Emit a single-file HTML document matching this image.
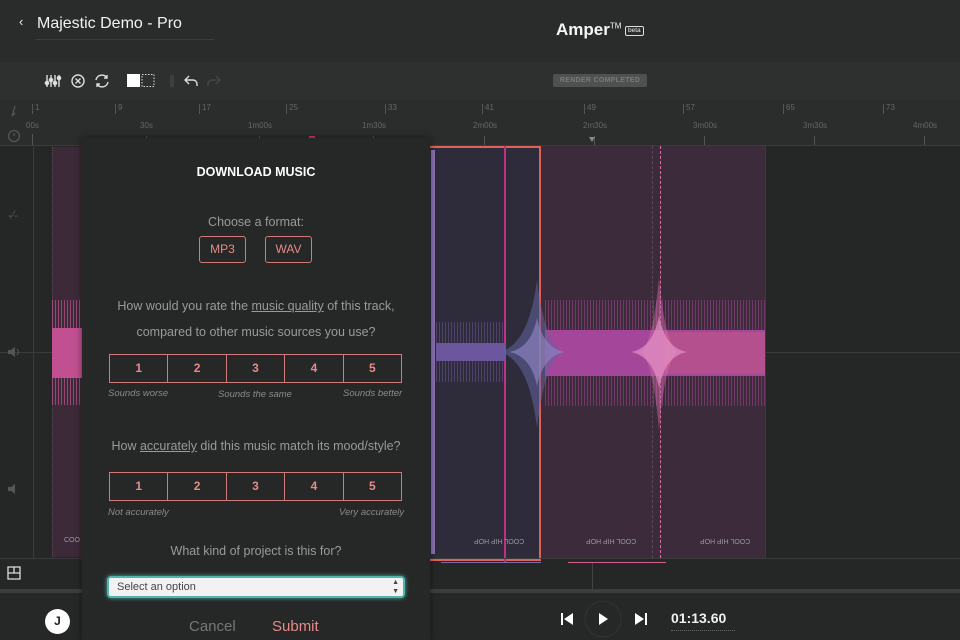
<!DOCTYPE html>
<html><head><meta charset="utf-8"><style>
*{margin:0;padding:0;box-sizing:border-box}
body{width:960px;height:640px;overflow:hidden;background:#252626;font-family:"Liberation Sans",sans-serif;position:relative;color:#ccc}
.abs{position:absolute}
.hdr{left:0;top:0;width:960px;height:62px;background:#2a2b2b}
.tb{left:0;top:62px;width:960px;height:38px;background:#2e2f2f}
.rl{left:0;top:100px;width:960px;height:46px;background:#2b2c2c;border-bottom:1px solid #3a3b3b}
.tick{position:absolute;width:1px;background:#555}
.lbl{position:absolute;font-size:8px;color:#666}
.modal{left:82px;top:138px;width:348px;height:502px;background:#262727;box-shadow:0 0 6px rgba(0,0,0,.5)}
.q{position:absolute;width:348px;text-align:center;font-size:12.5px;color:#9a9a9a}
.q u{text-decoration:underline}
.rate{position:absolute;left:27px;width:293px;height:29px;border:1.5px solid #d07a7a;display:flex}
.rate div{flex:1;border-right:1.5px solid #d07a7a;color:#e88a88;font-size:12px;font-weight:bold;text-align:center;line-height:26px}
.rate div:last-child{border-right:none}
.it{position:absolute;font-size:9.5px;font-style:italic;color:#8a8a8a}
.fmt{position:absolute;top:98px;width:47px;height:27px;border:1.5px solid #d07a7a;border-radius:3px;color:#e88a88;font-size:12px;text-align:center;line-height:24px}
.cool{position:absolute;font-size:7px;color:#999;transform:scaleX(-1) scaleY(-1)}
</style></head><body>
<div class="abs hdr"></div>
<div class="abs" style="left:19px;top:14px;color:#eee;font-size:13px">&#8249;</div>
<div class="abs" style="left:37px;top:15px;color:#f2f2f2;font-size:16px">Majestic Demo - Pro</div>
<div class="abs" style="left:36px;top:39px;width:178px;height:1px;background:#3c3d3d"></div>
<div class="abs" style="left:556px;top:20px;color:#f5f5f5;font-size:17px;font-weight:bold">Amper<sup style="font-size:8px;font-weight:normal">TM</sup></div>
<div class="abs" style="left:625px;top:26px;border:1px solid #ddd;border-radius:2px;font-size:6.5px;color:#eee;padding:0 2px;line-height:8px">beta</div>
<div class="abs tb"></div>
<svg class="abs" style="left:44px;top:72px" width="180" height="18" viewBox="0 0 180 18" fill="none" stroke="#ddd" stroke-width="1.4">
<path d="M3 3v12M7 3v12M11 3v12M15 3v12"/><circle cx="3" cy="11" r="1.6" fill="#ddd"/><circle cx="7" cy="8" r="1.6" fill="#ddd"/><circle cx="11" cy="11" r="1.6" fill="#ddd"/><circle cx="15" cy="6" r="1.6" fill="#ddd"/>
<circle cx="34" cy="9" r="6"/><path d="M31.5 6.5l5 5M36.5 6.5l-5 5"/>
<path d="M52 8a6 6 0 0 1 11-2M64 10a6 6 0 0 1-11 2"/><path d="M63 3v3h-3M53 15v-3h3"/>
<rect x="83" y="2" width="13" height="13" fill="#fff" stroke="none"/><rect x="98" y="2.5" width="12" height="12" stroke-dasharray="1.5 1.5" stroke-width="1"/>
<path d="M127 3v12M129 3v12" stroke="#444"/>
<path d="M142 8h7a4 4 0 0 1 4 4v2M145 4l-4 4 4 4"/>
<path d="M175 8h-7a4 4 0 0 0-4 4v2M172 4l4 4-4 4" stroke="#444"/>
</svg>
<div class="abs" style="left:553px;top:74px;width:94px;height:13px;background:#505050;border-radius:2px;color:#7a7a7a;font-size:7px;font-weight:bold;text-align:center;line-height:13px;letter-spacing:.3px">RENDER COMPLETED</div>
<div class="abs rl">
<div class="tick" style="left:32px;top:4px;height:10px"></div><div class="lbl" style="left:35px;top:3px">1</div>
<div class="tick" style="left:115px;top:4px;height:10px"></div><div class="lbl" style="left:118px;top:3px">9</div>
<div class="tick" style="left:199px;top:4px;height:10px"></div><div class="lbl" style="left:202px;top:3px">17</div>
<div class="tick" style="left:286px;top:4px;height:10px"></div><div class="lbl" style="left:289px;top:3px">25</div>
<div class="tick" style="left:385px;top:4px;height:10px"></div><div class="lbl" style="left:388px;top:3px">33</div>
<div class="tick" style="left:482px;top:4px;height:10px"></div><div class="lbl" style="left:485px;top:3px">41</div>
<div class="tick" style="left:584px;top:4px;height:10px"></div><div class="lbl" style="left:587px;top:3px">49</div>
<div class="tick" style="left:683px;top:4px;height:10px"></div><div class="lbl" style="left:686px;top:3px">57</div>
<div class="tick" style="left:783px;top:4px;height:10px"></div><div class="lbl" style="left:786px;top:3px">65</div>
<div class="tick" style="left:883px;top:4px;height:10px"></div><div class="lbl" style="left:886px;top:3px">73</div>
<div class="lbl" style="left:26px;top:21px">00s</div><div class="lbl" style="left:140px;top:21px">30s</div>
<div class="lbl" style="left:248px;top:21px">1m00s</div><div class="lbl" style="left:362px;top:21px">1m30s</div>
<div class="lbl" style="left:473px;top:21px">2m00s</div><div class="lbl" style="left:583px;top:21px">2m30s</div>
<div class="lbl" style="left:693px;top:21px">3m00s</div><div class="lbl" style="left:803px;top:21px">3m30s</div>
<div class="lbl" style="left:913px;top:21px">4m00s</div>
<div class="tick" style="left:32px;top:34px;height:11px"></div><div class="tick" style="left:146px;top:36px;height:9px"></div>
<div class="tick" style="left:259px;top:36px;height:9px"></div><div class="tick" style="left:373px;top:36px;height:9px"></div>
<div class="tick" style="left:484px;top:36px;height:9px"></div><div class="tick" style="left:594px;top:36px;height:9px"></div>
<div class="tick" style="left:704px;top:36px;height:9px"></div><div class="tick" style="left:814px;top:36px;height:9px"></div>
<div class="tick" style="left:924px;top:36px;height:9px"></div>
<div class="abs" style="left:589px;top:37px;width:0;height:0;border-left:3px solid transparent;border-right:3px solid transparent;border-top:5px solid #888"></div>
<div class="abs" style="left:309px;top:36px;width:6px;height:3px;background:#d0307a"></div>
</div>
<svg class="abs" style="left:6px;top:104px" width="20" height="40" fill="none" stroke="#555" stroke-width="1.3"><path d="M9 2l-3 10 3-3"/><circle cx="8" cy="32" r="5.5"/><path d="M8 29v3"/></svg>
<div class="abs" style="left:33px;top:146px;width:1px;height:412px;background:#3a3b3b"></div>
<div class="abs" style="left:0;top:352px;width:960px;height:1px;background:#3a3b3b"></div>
<div class="abs" style="left:8px;top:208px;color:#555;font-size:12px">-⁄-</div>
<svg class="abs" style="left:7px;top:345px" width="14" height="14"><path d="M1 5h3l4-3v10l-4-3H1z" fill="#555"/><path d="M10 4a4 4 0 0 1 0 6" stroke="#555" fill="none"/></svg>
<svg class="abs" style="left:7px;top:482px" width="14" height="14"><path d="M1 5h3l4-3v10l-4-3H1z" fill="#555"/></svg>
<div class="abs" style="left:52px;top:147px;width:30px;height:410px;background:#3c2a38;border-left:1px dotted #5a4a55"></div>
<div class="abs" style="left:52px;top:300px;width:30px;height:105px;background:repeating-linear-gradient(90deg,rgba(192,80,143,.7) 0 1px,transparent 1px 3px)"></div>
<div class="abs" style="left:52px;top:328px;width:30px;height:50px;background:#c0508f"></div>
<div class="abs" style="left:64px;top:537px;font-size:7px;color:#999">COO</div>
<div class="abs" style="left:430px;top:146px;width:111px;height:415px;background:#2e2b3b;border:2px solid #e0605a;border-left:none"></div>
<div class="abs" style="left:431px;top:150px;width:4px;height:404px;background:#8a70b0"></div>
<div class="abs" style="left:504px;top:146px;width:1.5px;height:417px;background:#c03080"></div>
<div class="abs" style="left:541px;top:146px;width:224px;height:412px;background:#3c2b3b"></div>
<div class="abs" style="left:652px;top:146px;width:0;height:412px;border-left:1px dashed #5a4a55"></div>
<div class="abs" style="left:660px;top:146px;width:0;height:412px;border-left:1px dashed #d86fa0"></div>
<div class="abs" style="left:765px;top:146px;width:1px;height:412px;background:#3a3b3b"></div>
<div class="abs" style="left:436px;top:322px;width:70px;height:60px;background:repeating-linear-gradient(90deg,rgba(120,95,170,.45) 0 1px,transparent 1px 3px)"></div>
<div class="abs" style="left:436px;top:343px;width:70px;height:18px;background:#6c569e"></div>
<div class="abs" style="left:545px;top:300px;width:220px;height:106px;background:repeating-linear-gradient(90deg,rgba(170,70,150,.5) 0 1px,transparent 1px 3px)"></div>
<div class="abs" style="left:545px;top:330px;width:220px;height:46px;background:#a4469a"></div>
<div class="abs" style="left:665px;top:332px;width:100px;height:42px;background:#b4508e"></div>
<svg class="abs" style="left:481px;top:270px" width="220" height="170">
<path d="M19 82 Q48 74 56 10 Q64 74 82 82 Q64 90 56 158 Q48 90 19 82Z" fill="rgba(100,100,160,.55)"/>
<path d="M28 82 Q50 78 56 48 Q62 78 84 82 Q62 86 56 116 Q50 86 28 82Z" fill="rgba(140,130,190,.7)"/>
<path d="M160 82 Q172 72 178 8 Q184 72 196 82 Q184 92 178 160 Q172 92 160 82Z" fill="rgba(210,110,170,.45)"/>
<path d="M150 82 Q172 78 178 46 Q184 78 206 82 Q184 86 178 118 Q172 86 150 82Z" fill="rgba(230,150,200,.65)"/>
</svg>
<div class="cool" style="left:474px;top:537px">COOL HIP HOP</div>
<div class="cool" style="left:586px;top:537px">COOL HIP HOP</div>
<div class="cool" style="left:700px;top:537px">COOL HIP HOP</div>
<div class="abs" style="left:441px;top:562px;width:100px;height:1px;background:#7070b0"></div>
<div class="abs" style="left:568px;top:562px;width:98px;height:1px;background:#d06090"></div>
<div class="abs" style="left:0;top:558px;width:960px;height:1px;background:#3a3b3b"></div>
<div class="abs" style="left:592px;top:563px;width:1px;height:27px;background:#444"></div>
<svg class="abs" style="left:7px;top:566px" width="14" height="14" fill="none" stroke="#ddd" stroke-width="1.3"><path d="M1 1h12v12H1zM1 7h12M7 1v6"/></svg>
<div class="abs" style="left:0;top:589px;width:960px;height:4px;background:#3c3d3d"></div>
<div class="abs" style="left:0;top:593px;width:960px;height:47px;background:#262727"></div>
<div class="abs" style="left:45px;top:609px;width:25px;height:25px;border-radius:50%;background:#fff;color:#222;font-size:12px;font-weight:bold;text-align:center;line-height:25px">J</div>
<svg class="abs" style="left:556px;top:600px" width="100" height="40"><path d="M6 13v12" stroke="#fff" stroke-width="2"/><path d="M17 13v12l-9-6z" fill="#fff"/>
<circle cx="47" cy="19" r="18" fill="none" stroke="#333"/><path d="M43 13v12l9-6z" fill="#fff"/>
<path d="M79 13v12l9-6z" fill="#fff"/><path d="M90 13v12" stroke="#fff" stroke-width="2"/></svg>
<div class="abs" style="left:671px;top:610px;color:#f0f0f0;font-size:14px;font-weight:bold">01:13.60</div>
<div class="abs" style="left:671px;top:630px;width:64px;border-top:1px dotted #666"></div>
<div class="abs modal">
<div class="q" style="top:27px;color:#fff;font-weight:bold;font-size:12.5px">DOWNLOAD MUSIC</div>
<div class="q" style="top:77px">Choose a format:</div>
<div class="fmt" style="left:117px">MP3</div><div class="fmt" style="left:183px">WAV</div>
<div class="q" style="top:161px">How would you rate the <u>music quality</u> of this track,</div>
<div class="q" style="top:187px">compared to other music sources you use?</div>
<div class="rate" style="top:216px"><div>1</div><div>2</div><div>3</div><div>4</div><div>5</div></div>
<div class="it" style="left:26px;top:250px">Sounds worse</div><div class="it" style="left:136px;top:251px">Sounds the same</div><div class="it" style="left:261px;top:250px">Sounds better</div>
<div class="q" style="top:301px">How <u>accurately</u> did this music match its mood/style?</div>
<div class="rate" style="top:334px"><div>1</div><div>2</div><div>3</div><div>4</div><div>5</div></div>
<div class="it" style="left:26px;top:369px">Not accurately</div><div class="it" style="left:257px;top:369px">Very accurately</div>
<div class="q" style="top:406px">What kind of project is this for?</div>
<div class="abs" style="left:25px;top:438px;width:298px;height:22px;background:#f2f2f2;border:2px solid #4fb5ad;border-radius:4px;box-shadow:0 0 4px #4fb5ad;color:#444;font-size:11px;padding-left:8px;line-height:18px">Select an option<span style="position:absolute;right:4px;top:0;font-size:7px;line-height:9px">▲<br>▼</span></div>
<div class="abs" style="left:107px;top:480px;color:#777;font-size:15px">Cancel</div>
<div class="abs" style="left:190px;top:480px;color:#e88a88;font-size:15px">Submit</div>
</div>
</body></html>
